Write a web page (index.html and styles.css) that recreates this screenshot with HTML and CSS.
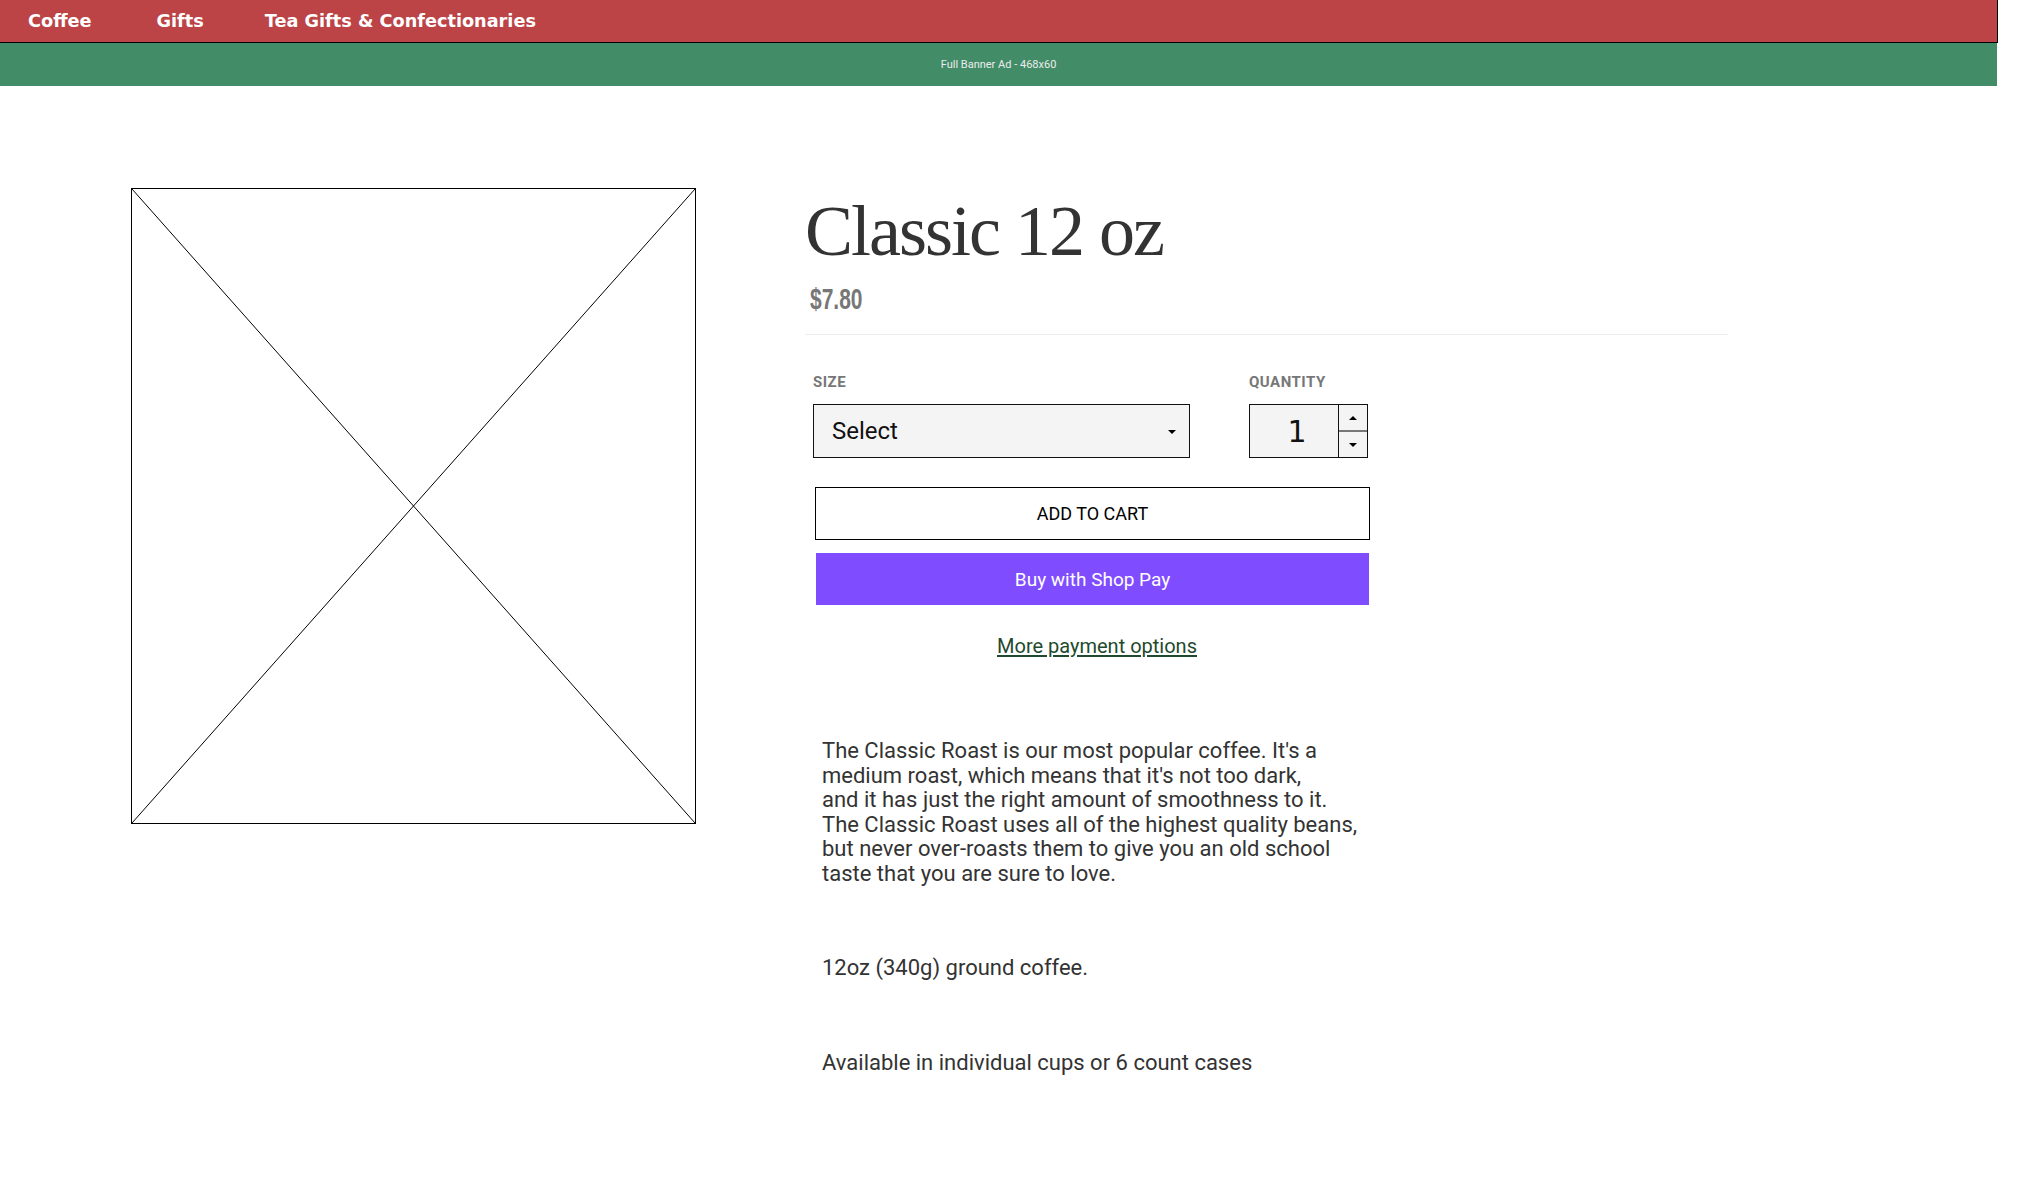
FILE: index.html
```html
<!DOCTYPE html>
<html lang="en">
<head>
<meta charset="utf-8">
<title>Classic 12 oz</title>
<link rel="stylesheet" href="styles.css">
</head>
<body>
<header class="site-header">
  <nav class="topnav">
    <a class="topnav-link topnav-first" href="#">Coffee</a>
    <a class="topnav-link" href="#">Gifts</a>
    <a class="topnav-link" href="#">Tea Gifts &amp; Confectionaries</a>
  </nav>
  <div class="banner">Full Banner Ad - 468x60</div>
</header>

<main class="product">
  <div class="product-media">
    <svg class="placeholder" viewBox="0 0 100 100" preserveAspectRatio="none" aria-hidden="true">
      <line x1="0" y1="0" x2="100" y2="100" vector-effect="non-scaling-stroke"/>
      <line x1="100" y1="0" x2="0" y2="100" vector-effect="non-scaling-stroke"/>
    </svg>
  </div>

  <section class="product-info">
    <h1 class="product-title">Classic 12 oz</h1>
    <div class="product-price"><span class="price-text">$7.80</span></div>
    <hr class="divider">

    <div class="purchase">
      <div class="options">
        <div class="field field-size">
          <div class="field-label">SIZE</div>
          <div class="select-box"><span>Select</span><span class="caret"></span></div>
        </div>
        <div class="field field-qty">
          <div class="field-label">QUANTITY</div>
          <div class="qty-box">
            <span class="qty-value">1</span>
            <span class="qty-spin">
              <span class="spin-btn"><span class="tri-up"></span></span>
              <span class="spin-btn spin-down"><span class="tri-down"></span></span>
            </span>
          </div>
        </div>
      </div>

      <button class="btn-cart" type="button">ADD TO CART</button>
      <button class="btn-shoppay" type="button">Buy with Shop Pay</button>
      <a class="more-pay" href="#">More payment options</a>

      <div class="description">
        <p>The Classic Roast is our most popular coffee. It's a<br>
        medium roast, which means that it's not too dark,<br>
        and it has just the right amount of smoothness to it.<br>
        The Classic Roast uses all of the highest quality beans,<br>
        but never over-roasts them to give you an old school<br>
        taste that you are sure to love.</p>
        <p>12oz (340g) ground coffee.</p>
        <p>Available in individual cups or 6 count cases</p>
      </div>
    </div>
  </section>
</main>
</body>
</html>
```

FILE: styles.css
```css
html, body {
  margin: 0;
  padding: 0;
  background: #ffffff;
}

body {
  font-family: Roboto, "Liberation Sans", sans-serif;
  color: #333333;
}

.site-header {
  width: 1998px;
}

.topnav {
  height: 42px;
  background: #bc4346;
  border-bottom: 1px solid #000;
  border-right: 1px solid #000;
  display: flex;
  align-items: center;
  gap: 61px;
  padding-left: 28px;
  box-sizing: content-box;
}

.topnav-link {
  font-family: "DejaVu Sans", sans-serif;
  font-weight: 700;
  font-size: 17.7px;
  line-height: 18px;
  color: #ffffff;
  text-decoration: none;
}

.topnav-first {
  margin-right: 4px;
}

.banner {
  width: 1997px;
  height: 43px;
  background: #428d68;
  display: flex;
  align-items: center;
  justify-content: center;
  font-family: Roboto, sans-serif;
  font-size: 11px;
  color: #ececec;
}

.product {
  display: flex;
  align-items: flex-start;
  gap: 109px;
  padding: 102px 0 40px 131px;
}

.product-media {
  width: 565px;
  height: 636px;
  box-sizing: border-box;
  border: 1px solid #000;
  flex: none;
}

.placeholder {
  display: block;
  width: 100%;
  height: 100%;
}

.placeholder line {
  stroke: #000;
  stroke-width: 1;
}

.product-info {
  width: 923px;
  padding-top: 7px;
}

.product-title {
  margin: 0;
  font-family: "Liberation Serif", "DejaVu Serif", serif;
  font-weight: 400;
  font-size: 72px;
  line-height: 72px;
  letter-spacing: -2px;
  color: #333333;
}

.product-price {
  margin-top: 17px;
  margin-left: 5px;
  height: 30px;
}

.price-text {
  display: inline-block;
  font-family: "Liberation Sans", sans-serif;
  font-weight: 700;
  font-size: 30px;
  line-height: 30px;
  color: #777777;
  transform: scaleX(0.7);
  transform-origin: left center;
}

.divider {
  margin: 20px 0 0 0;
  border: 0;
  border-top: 1px solid #ededed;
  height: 0;
}

.purchase {
  margin-left: 8px;
  width: 557px;
}

.options {
  display: flex;
  gap: 59px;
  margin-top: 40px;
}

.field-label {
  font-family: Roboto, sans-serif;
  font-weight: 700;
  font-size: 15px;
  line-height: 15px;
  letter-spacing: 0.5px;
  color: #777777;
  margin-bottom: 14px;
}

.select-box {
  width: 377px;
  height: 54px;
  box-sizing: border-box;
  border: 1px solid #111;
  background: #f4f4f4;
  display: flex;
  align-items: center;
  justify-content: space-between;
  padding: 0 13px 0 18px;
  font-family: Roboto, sans-serif;
  font-size: 24px;
  color: #111;
}

.caret {
  width: 0;
  height: 0;
  border-left: 4px solid transparent;
  border-right: 4px solid transparent;
  border-top: 4px solid #000;
  margin-top: 2px;
}

.qty-box {
  width: 119px;
  height: 54px;
  box-sizing: border-box;
  border: 1px solid #111;
  background: #f4f4f4;
  display: flex;
}

.qty-value {
  flex: 1;
  display: flex;
  align-items: center;
  justify-content: center;
  padding-left: 6px;
  font-family: "DejaVu Sans", sans-serif;
  font-size: 30px;
  color: #111;
}

.qty-spin {
  width: 28px;
  border-left: 1px solid #111;
  display: flex;
  flex-direction: column;
}

.spin-btn {
  flex: 1;
  display: flex;
  align-items: center;
  justify-content: center;
}

.spin-down {
  border-top: 2px solid #777;
}

.tri-up {
  width: 0;
  height: 0;
  border-left: 4px solid transparent;
  border-right: 4px solid transparent;
  border-bottom: 4px solid #000;
}

.tri-down {
  width: 0;
  height: 0;
  border-left: 4px solid transparent;
  border-right: 4px solid transparent;
  border-top: 4px solid #000;
}

.btn-cart {
  display: block;
  margin: 29px 0 0 2px;
  width: 555px;
  height: 53px;
  box-sizing: border-box;
  border: 1px solid #000;
  background: #ffffff;
  font-family: Roboto, sans-serif;
  font-size: 18px;
  color: #000;
  padding: 0;
}

.btn-shoppay {
  display: block;
  margin: 13px 0 0 3px;
  width: 553px;
  height: 52px;
  border: 0;
  background: #7f4cff;
  font-family: Roboto, sans-serif;
  font-size: 19px;
  color: #ffffff;
  padding: 0;
}

.more-pay {
  display: block;
  margin-top: 31px;
  padding-left: 11px;
  text-align: center;
  font-family: Roboto, sans-serif;
  font-size: 20px;
  line-height: 20px;
  color: #1f4a2d;
  text-decoration: underline;
  text-underline-offset: 2px;
}

.description {
  margin-top: 83px;
  padding: 0 9px;
  font-family: Roboto, sans-serif;
  font-size: 22px;
  line-height: 24.5px;
  color: #333333;
}

.description p {
  margin: 0 0 70px 0;
}
```
